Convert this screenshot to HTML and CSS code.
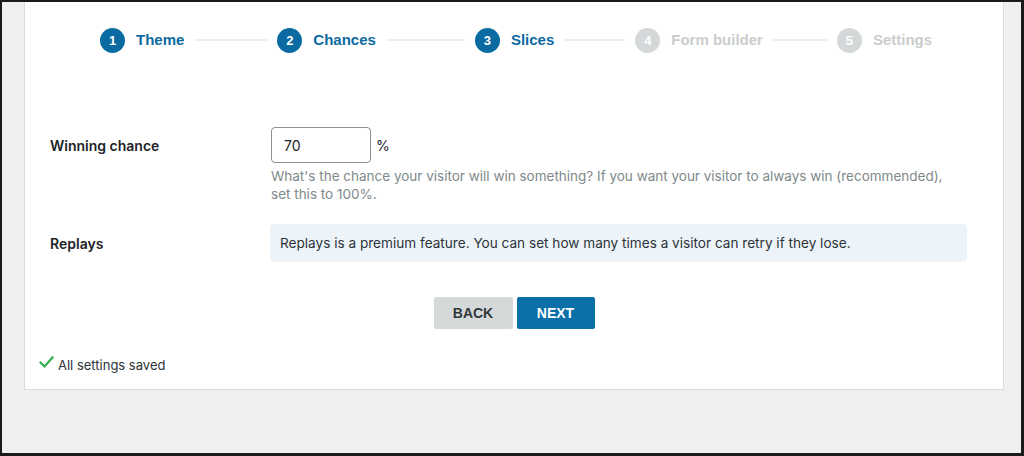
FILE: index.html
```html
<!DOCTYPE html>
<html lang="en">
<head>
<meta charset="utf-8">
<title>Wheel wizard – Slices</title>
<link rel="stylesheet" href="styles.css">
</head>
<body>
<div class="screen">
  <div class="panel">
    <ol class="steps">
      <li class="step is-done"><span class="num">1</span><span class="label">Theme</span></li>
      <li class="line line-1"></li>
      <li class="step is-done"><span class="num">2</span><span class="label">Chances</span></li>
      <li class="line line-2"></li>
      <li class="step is-done"><span class="num">3</span><span class="label">Slices</span></li>
      <li class="line line-3"></li>
      <li class="step"><span class="num">4</span><span class="label">Form builder</span></li>
      <li class="line line-4"></li>
      <li class="step"><span class="num">5</span><span class="label">Settings</span></li>
    </ol>

    <div class="form">
      <div class="row row-chance">
        <div class="row-label">Winning chance</div>
        <div class="row-field">
          <div class="input-line">
            <input class="num-input" type="text" value="70">
            <span class="unit">%</span>
          </div>
          <p class="desc">What's the chance your visitor will win something? If you want your visitor to always win (recommended), set this to 100%.</p>
        </div>
      </div>
      <div class="row row-replays">
        <div class="row-label">Replays</div>
        <div class="row-field">
          <div class="notice">Replays is a premium feature. You can set how many times a visitor can retry if they lose.</div>
        </div>
      </div>
    </div>

    <div class="actions">
      <button class="btn btn-back" type="button">Back</button>
      <button class="btn btn-next" type="button">Next</button>
    </div>

    <div class="saved">
      <svg class="check" width="15" height="13" viewBox="0 0 15 13" aria-hidden="true"><polyline points="1.5,6.5 5.5,10.5 13.5,1.5" fill="none" stroke="#2eb04c" stroke-width="2.2" stroke-linecap="square"/></svg>
      <span>All settings saved</span>
    </div>
  </div>
</div>
</body>
</html>
```

FILE: styles.css
```css
* { box-sizing: border-box; }
html, body { margin: 0; padding: 0; }
body {
  background: #1b1b1b;
  font-family: Inter, "Liberation Sans", Arial, sans-serif;
  color: #1d2327;
}
.screen {
  width: 1024px;
  height: 456px;
  border-style: solid;
  border-color: #1b1b1b;
  border-width: 2px 3px 3px 2px;
  background: #f0f0f0;
  overflow: hidden;
}
.panel {
  margin-left: 22px;
  width: 980px;
  height: 388px;
  background: #fff;
  border: 1px solid #dcdcde;
  border-top: none;
  display: flex;
  flex-direction: column;
}

/* steps */
.steps {
  list-style: none;
  margin: 25px 0 0;
  padding: 0 0 0 75px;
  display: flex;
  align-items: center;
  height: 26px;
}
.step {
  display: flex;
  align-items: center;
  gap: 11px;
  font-family: "Liberation Sans", Arial, sans-serif;
  font-weight: 700;
  font-size: 15px;
  line-height: 1;
  color: #c9cdcd;
}
.label { margin-top: -2px; }
.num {
  width: 25px;
  height: 25px;
  border-radius: 50%;
  background: #d4d8d8;
  color: #fff;
  font-size: 13px;
  display: flex;
  align-items: center;
  justify-content: center;
}
.step.is-done { color: #0b6aa2; }
.step.is-done .num { background: #0b6aa2; }
.line {
  flex: none;
  height: 2px;
  background: #eeeeee;
  margin: 0 10px;
}
.line-1 { width: 73px; }
.line-2 { width: 79px; }
.line-3 { width: 61px; }
.line-4 { width: 54px; }

/* form */
.form { margin-top: 74px; }
.row {
  display: grid;
  grid-template-columns: 221px 1fr;
  padding-left: 25px;
  padding-right: 36px;
}
.row-label {
  font-weight: 600;
  font-size: 14px;
  color: #1d2327;
}
.row-chance .row-label { padding-top: 10px; }
.input-line {
  display: flex;
  align-items: center;
  gap: 5px;
}
.num-input {
  width: 100px;
  height: 36px;
  border: 1px solid #8c8f94;
  border-radius: 4px;
  padding: 0 12px;
  font-family: Inter, "Liberation Sans", Arial, sans-serif;
  font-size: 14px;
  color: #1d2327;
  background: #fff;
}
.unit { font-size: 14px; color: #1d2327; }
.desc {
  margin: 5px 0 0;
  padding-right: 12px;
  font-size: 13.5px;
  line-height: 17.5px;
  color: #7e8a8a;
}
.row-replays { margin-top: 21px; align-items: center; }
.notice {
  background: #edf4f9;
  border-radius: 4px;
  height: 38px;
  display: flex;
  align-items: center;
  padding: 0 10px;
  font-size: 13.6px;
  color: #2c3338;
  margin-left: -1px;
}

/* actions */
.actions {
  margin-top: 35px;
  display: flex;
  justify-content: center;
  gap: 4px;
}
.btn {
  height: 32px;
  width: 79px;
  border: none;
  border-radius: 2px;
  font-family: "Liberation Sans", Arial, sans-serif;
  font-weight: 700;
  font-size: 14px;
  text-transform: uppercase;
  cursor: pointer;
}
.btn-back { background: #d5d9d9; color: #32373c; }
.btn-next { background: #0b6fa8; color: #fff; width: 78px; }

/* saved */
.saved {
  margin-top: 28px;
  padding-left: 14px;
  display: flex;
  align-items: center;
  gap: 4px;
  font-size: 13px;
  color: #2c3338;
}
.check { margin-top: -5px; }
```
